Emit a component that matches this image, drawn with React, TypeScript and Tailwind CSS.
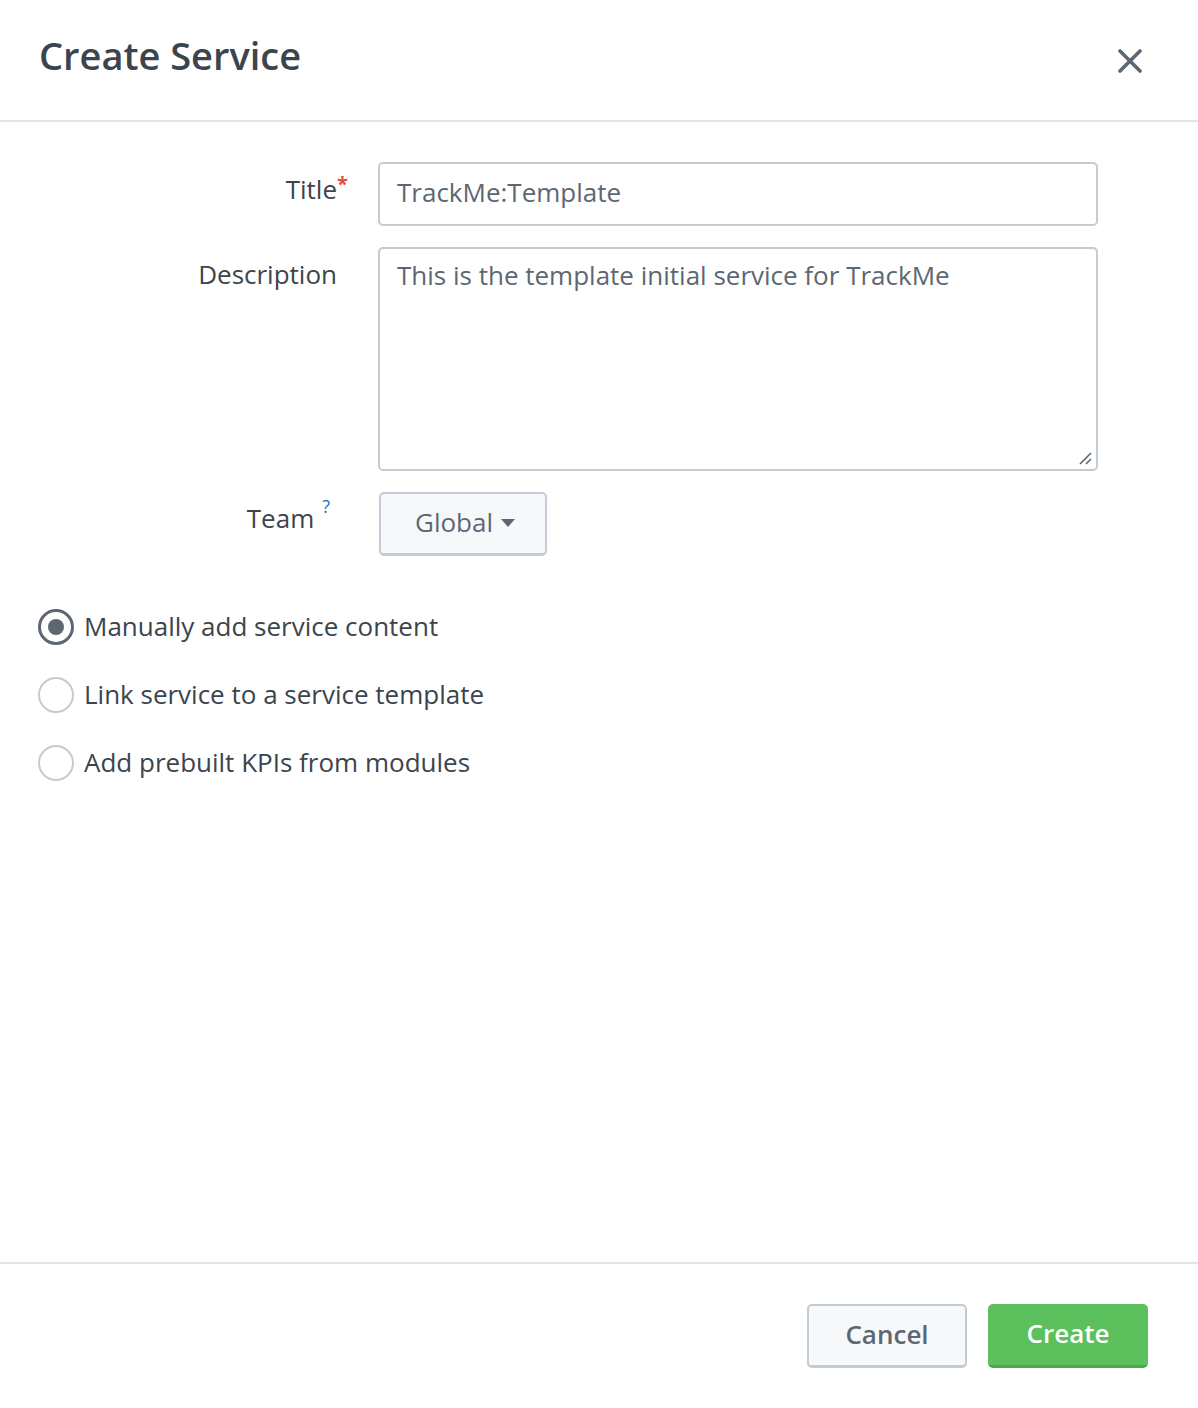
import React from "react";

export default function App() {
  const font = { fontFamily: "'Open Sans', Lato, sans-serif" };
  return (
    <div className="w-[1198px] h-[1408px] bg-white flex flex-col text-[#3c444d]" style={font}>
      {/* Header */}
      <div className="h-[122px] shrink-0 border-b-2 border-[#e1e6eb] flex items-start justify-between pl-[39px] pr-[55px]">
        <h1 className="mt-[31px] text-[38px] leading-[48px] font-semibold text-[#3c444d]">Create Service</h1>
        <button className="mt-[48px] w-[26px] h-[26px] flex items-center justify-center text-[#5c6773]">
          <svg width="24" height="24" viewBox="0 0 24 24">
            <path d="M2 2 L22 22 M22 2 L2 22" stroke="#5c6773" strokeWidth="3.6" strokeLinecap="round" />
          </svg>
        </button>
      </div>

      {/* Body */}
      <div className="flex-1 flex flex-col pt-[40px]">
        <div className="flex flex-col gap-[21px]">
          <div className="flex items-start">
            <div className="w-[337px] shrink-0 flex justify-end pt-[11px]">
              <span className="text-[26px] leading-[32px] relative">
                Title
                <span className="absolute -right-[11px] -top-[5px] text-[20px] text-[#dc4e41] font-bold">*</span>
              </span>
            </div>
            <div className="ml-[41px] w-[720px] h-[64px] border-2 border-[#c3cbd4] rounded-[5px] flex items-center px-[17px] pb-[3px] text-[26px] text-[#5c6773]">
              TrackMe:Template
            </div>
          </div>

          <div className="flex items-start">
            <div className="w-[337px] shrink-0 flex justify-end pt-[11px]">
              <span className="text-[26px] leading-[32px]">Description</span>
            </div>
            <div className="ml-[41px] w-[720px] h-[224px] border-2 border-[#c3cbd4] rounded-[5px] relative px-[17px] pt-[10px] text-[26px] leading-[32px] text-[#5c6773]">
              This is the template initial service for TrackMe
              <svg className="absolute right-[3px] bottom-[3px]" width="16" height="16" viewBox="0 0 16 16">
                <path d="M14 3 L3 14 M14 9 L9 14" stroke="#5c6773" strokeWidth="1.6" />
              </svg>
            </div>
          </div>

          <div className="flex items-start">
            <div className="w-[337px] shrink-0 flex justify-end pt-[10px] pr-[7px]">
              <span className="text-[26px] leading-[32px] flex items-start">
                Team
                <span className="ml-[8px] -mt-[8px] text-[18px] leading-[24px] text-[#1a73c3]">?</span>
              </span>
            </div>
            <button className="ml-[42px] w-[168px] h-[64px] bg-[#f7f8fa] border-2 border-b-[3px] border-[#c3cbd4] rounded-[5px] flex items-center justify-center gap-[8px] pb-[3px] pl-[4px] text-[26px] text-[#5c6773]">
              Global
              <svg width="14" height="9" viewBox="0 0 14 9" className="mt-[3px]">
                <path d="M0 0 H14 L7 8 Z" fill="#5c6773" />
              </svg>
            </button>
          </div>
        </div>

        <div className="mt-[53px] pl-[38px] flex flex-col gap-[32px]">
          {[
            { label: "Manually add service content", checked: true },
            { label: "Link service to a service template", checked: false },
            { label: "Add prebuilt KPIs from modules", checked: false },
          ].map((r) => (
            <div key={r.label} className="flex items-center h-[36px]">
              <div
                className={
                  r.checked
                    ? "w-[36px] h-[36px] rounded-full border-[3px] border-[#5c6773] flex items-center justify-center"
                    : "w-[36px] h-[36px] rounded-full border-2 border-[#c3cbd4]"
                }
              >
                {r.checked && <div className="w-[16px] h-[16px] rounded-full bg-[#5c6773]" />}
              </div>
              <span className="ml-[10px] -mt-[2px] text-[26px] leading-[36px] text-[#3c444d]">{r.label}</span>
            </div>
          ))}
        </div>
      </div>

      {/* Footer */}
      <div className="h-[146px] shrink-0 border-t-2 border-[#e1e6eb] flex items-start justify-end gap-[21px] pr-[50px] pt-[40px]">
        <button className="w-[160px] h-[64px] bg-[#f7f8fa] border-2 border-b-[3px] border-[#c3cbd4] rounded-[5px] pb-[2px] text-[26px] font-semibold text-[#5c6773]">
          Cancel
        </button>
        <button className="w-[160px] h-[64px] bg-[#5cc05c] border-b-[3px] border-[#4aa94a] rounded-[5px] pb-[2px] text-[26px] font-semibold text-white">
          Create
        </button>
      </div>
    </div>
  );
}
